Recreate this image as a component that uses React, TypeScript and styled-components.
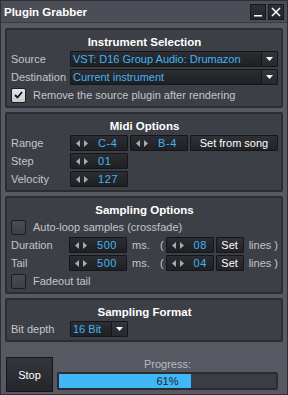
import React from 'react';
import styled, { createGlobalStyle } from 'styled-components';

const GlobalStyle = createGlobalStyle`
  html, body {
    margin: 0;
    padding: 0;
    background: #565962;
  }
  body {
    font-family: "Liberation Sans", Arial, sans-serif;
    font-size: 11px;
  }
`;

const Window = styled.div`
  width: 288px;
  height: 395px;
  box-sizing: border-box;
  border: 1px solid #2e2f34;
  background: #565962;
  display: flex;
  flex-direction: column;
`;

const TitleBar = styled.div`
  height: 22px;
  box-sizing: border-box;
  background: #4b4e56;
  border-bottom: 1px solid #3a3c42;
  display: flex;
  align-items: center;
  padding: 0 3px 0 3px;
`;

const Title = styled.div`
  flex: 1;
  color: #ffffff;
  font-weight: bold;
  font-size: 11.5px;
  padding-top: 1px;
`;

const WinButton = styled.div`
  width: 16px;
  height: 16px;
  box-sizing: border-box;
  margin-left: 2px;
  background: linear-gradient(#2f3035, #25262a);
  border: 1px solid #18191c;
  display: flex;
  align-items: center;
  justify-content: center;
`;

const Body = styled.div`
  flex: 1;
  display: flex;
  flex-direction: column;
  gap: 4px;
  padding: 5px 4px 0 4px;
`;

const Panel = styled.div`
  background: #3d3f47;
  border: 2px solid #2c2d32;
  border-radius: 2px;
  padding: 3px 3px 3px 4px;
  display: flex;
  flex-direction: column;
  gap: 2px;
`;

const Header = styled.div`
  height: 18px;
  margin-bottom: -2px;
  display: flex;
  align-items: center;
  justify-content: center;
  color: #ffffff;
  font-weight: bold;
  font-size: 11.5px;
`;

const Row = styled.div`
  height: 16px;
  display: flex;
  align-items: center;
  gap: 2px;
`;

const Label = styled.div`
  width: 57px;
  color: #c4c5c9;
`;

const Text = styled.span<{ $w?: number }>`
  color: #c4c5c9;
  width: ${p => (p.$w ? p.$w + 'px' : 'auto')};
  flex-shrink: 0;
`;

const Control = styled.div<{ $w?: number }>`
  height: 16px;
  box-sizing: border-box;
  width: ${p => (p.$w ? p.$w + 'px' : 'auto')};
  flex: ${p => (p.$w ? '0 0 auto' : '1')};
  background: linear-gradient(#2c2d32, #1f2024);
  border: 1px solid #151619;
  border-radius: 1px;
  display: flex;
  align-items: center;
  color: #42b4f2;
  overflow: hidden;
`;

const DropText = styled.div`
  flex: 1;
  padding-left: 2px;
  white-space: nowrap;
`;

const DropArrow = styled.div`
  width: 15px;
  height: 100%;
  border-left: 1px solid #151619;
  background: linear-gradient(#34353b, #27282d);
  display: flex;
  align-items: center;
  justify-content: center;
`;

const SpinArrows = styled.div`
  width: 27px;
  display: flex;
  gap: 4px;
  padding-left: 5px;
  box-sizing: border-box;
`;

const SpinValue = styled.div`
  letter-spacing: 0.6px;
`;

const Button = styled.div<{ $w: number }>`
  width: ${p => p.$w}px;
  height: 16px;
  box-sizing: border-box;
  background: linear-gradient(#303136, #222327);
  border: 1px solid #151619;
  border-radius: 1px;
  color: #ffffff;
  display: flex;
  align-items: center;
  justify-content: center;
  flex-shrink: 0;
`;

const CheckRow = styled.div`
  height: 16px;
  display: flex;
  align-items: center;
  gap: 7px;
  color: #c4c5c9;
`;

const CheckBox = styled.div<{ $on?: boolean }>`
  width: 15px;
  height: 15px;
  box-sizing: border-box;
  border: 1px solid #1c1d21;
  border-radius: 2px;
  background: ${p => (p.$on ? 'linear-gradient(#e6e6e6, #c9c9c9)' : 'linear-gradient(#4a4c53, #3e4046)')};
  display: flex;
  align-items: center;
  justify-content: center;
`;

const Footer = styled.div`
  display: flex;
  gap: 4px;
  padding: 11px 5px 0 1px;
`;

const StopButton = styled.div`
  width: 47px;
  height: 35px;
  box-sizing: border-box;
  background: linear-gradient(#34363c, #25262b);
  border: 1px solid #16171a;
  color: #ffffff;
  display: flex;
  align-items: center;
  justify-content: center;
`;

const ProgressCol = styled.div`
  flex: 1;
  display: flex;
  flex-direction: column;
  align-items: center;
`;

const ProgressLabel = styled.div`
  color: #b9bbc1;
  height: 15px;
  line-height: 15px;
`;

const ProgressBar = styled.div`
  position: relative;
  align-self: stretch;
  height: 18px;
  box-sizing: border-box;
  border: 2px solid #2c2d32;
  border-radius: 2px;
  background: #3b3d45;
`;

const ProgressFill = styled.div`
  height: 100%;
  background: #40b7f6;
`;

const ProgressText = styled.div`
  position: absolute;
  inset: 0;
  display: flex;
  align-items: center;
  justify-content: center;
  color: #1c2630;
`;

const Tri = ({ dir }: { dir: 'l' | 'r' | 'd' }) => (
  <svg width={dir === 'd' ? 7 : 4} height={dir === 'd' ? 4 : 7} viewBox={dir === 'd' ? '0 0 7 4' : '0 0 4 7'}>
    {dir === 'l' && <polygon points="4,0 4,7 0,3.5" fill="#a9abb0" />}
    {dir === 'r' && <polygon points="0,0 0,7 4,3.5" fill="#a9abb0" />}
    {dir === 'd' && <polygon points="0,0 7,0 3.5,4" fill="#ffffff" />}
  </svg>
);

const Dropdown = ({ value, w }: { value: string; w?: number }) => (
  <Control $w={w}>
    <DropText>{value}</DropText>
    <DropArrow>
      <Tri dir="d" />
    </DropArrow>
  </Control>
);

const Spin = ({ value, w = 58 }: { value: string; w?: number }) => (
  <Control $w={w}>
    <SpinArrows>
      <Tri dir="l" />
      <Tri dir="r" />
    </SpinArrows>
    <SpinValue>{value}</SpinValue>
  </Control>
);

const Check = ({ on }: { on?: boolean }) => (
  <CheckBox $on={on}>
    {on && (
      <svg width="9" height="8" viewBox="0 0 9 8">
        <polyline points="1,4 3.5,6.5 8,1" fill="none" stroke="#111" strokeWidth="1.8" />
      </svg>
    )}
  </CheckBox>
);

const App = () => {
  const progress = 61;
  return (
    <Window>
      <GlobalStyle />
      <TitleBar>
        <Title>Plugin Grabber</Title>
        <WinButton>
          <svg width="10" height="10" viewBox="0 0 10 10">
            <rect x="1" y="8" width="8" height="1.5" fill="#fff" />
          </svg>
        </WinButton>
        <WinButton>
          <svg width="10" height="10" viewBox="0 0 10 10">
            <path d="M1 1 L9 9 M9 1 L1 9" stroke="#fff" strokeWidth="1.5" />
          </svg>
        </WinButton>
      </TitleBar>
      <Body>
        <Panel>
          <Header>Instrument Selection</Header>
          <Row>
            <Label>Source</Label>
            <Dropdown value="VST: D16 Group Audio: Drumazon" />
          </Row>
          <Row>
            <Label>Destination</Label>
            <Dropdown value="Current instrument" />
          </Row>
          <CheckRow>
            <Check on />
            <span>Remove the source plugin after rendering</span>
          </CheckRow>
        </Panel>

        <Panel>
          <Header>Midi Options</Header>
          <Row>
            <Label>Range</Label>
            <Spin value="C-4" />
            <Spin value="B-4" />
            <Button $w={88}>Set from song</Button>
          </Row>
          <Row>
            <Label>Step</Label>
            <Spin value="01" />
          </Row>
          <Row>
            <Label>Velocity</Label>
            <Spin value="127" />
          </Row>
        </Panel>

        <Panel>
          <Header>Sampling Options</Header>
          <CheckRow>
            <Check />
            <span>Auto-loop samples (crossfade)</span>
          </CheckRow>
          <Row>
            <Label>Duration</Label>
            <Spin value="500" />
            <Text $w={29}>&nbsp;ms.</Text>
            <Text>(</Text>
            <Spin value="08" w={48} />
            <Button $w={28}>Set</Button>
            <Text>&nbsp;lines )</Text>
          </Row>
          <Row>
            <Label>Tail</Label>
            <Spin value="500" />
            <Text $w={29}>&nbsp;ms.</Text>
            <Text>(</Text>
            <Spin value="04" w={48} />
            <Button $w={28}>Set</Button>
            <Text>&nbsp;lines )</Text>
          </Row>
          <CheckRow>
            <Check />
            <span>Fadeout tail</span>
          </CheckRow>
        </Panel>

        <Panel>
          <Header>Sampling Format</Header>
          <Row>
            <Label>Bit depth</Label>
            <Dropdown value="16 Bit" w={58} />
          </Row>
        </Panel>

        <Footer>
          <StopButton>Stop</StopButton>
          <ProgressCol>
            <ProgressLabel>Progress:</ProgressLabel>
            <ProgressBar>
              <ProgressFill style={{ width: `${progress}%` }} />
              <ProgressText>{progress}%</ProgressText>
            </ProgressBar>
          </ProgressCol>
        </Footer>
      </Body>
    </Window>
  );
};

export default App;
